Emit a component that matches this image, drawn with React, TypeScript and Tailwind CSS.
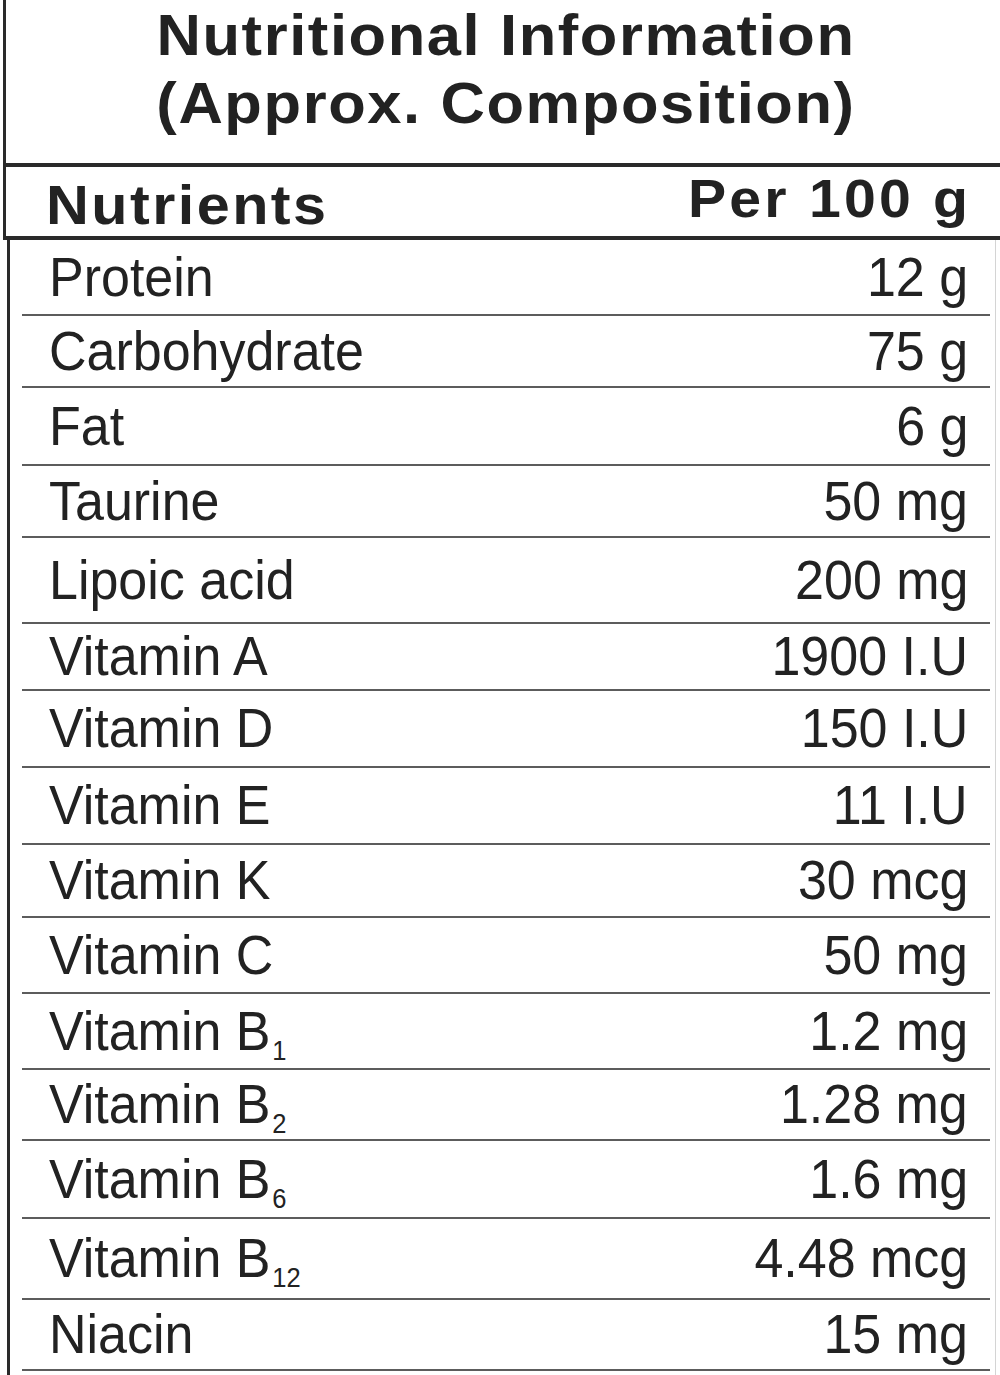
import React from "react";

type Row = { name: string; sub?: string; value: string; h: number };

const rows: Row[] = [
  { name: "Protein", value: "12 g", h: 76 },
  { name: "Carbohydrate", value: "75 g", h: 72 },
  { name: "Fat", value: "6 g", h: 78 },
  { name: "Taurine", value: "50 mg", h: 72 },
  { name: "Lipoic acid", value: "200 mg", h: 86 },
  { name: "Vitamin A", value: "1900 I.U", h: 67 },
  { name: "Vitamin D", value: "150 I.U", h: 77 },
  { name: "Vitamin E", value: "11 I.U", h: 77 },
  { name: "Vitamin K", value: "30 mcg", h: 73 },
  { name: "Vitamin C", value: "50 mg", h: 76 },
  { name: "Vitamin B", sub: "1", value: "1.2 mg", h: 76 },
  { name: "Vitamin B", sub: "2", value: "1.28 mg", h: 71 },
  { name: "Vitamin B", sub: "6", value: "1.6 mg", h: 78 },
  { name: "Vitamin B", sub: "12", value: "4.48 mcg", h: 81 },
  { name: "Niacin", value: "15 mg", h: 71 },
];

export default function App() {
  return (
    <div className="w-[1000px] h-[1375px] bg-white flex flex-col overflow-hidden font-['Liberation_Sans',Arial,sans-serif] text-[#222]">
      <div className="ml-[3px] border-l-[3px] border-[#2a2a2a]">
        <div className="h-[163px] pt-[1px] pl-[6px] text-center font-bold text-[58px] leading-[68px] tracking-[1.5px]">
          <div className="scale-x-[1.06]">Nutritional Information</div>
          <div className="scale-x-[1.06]">(Approx. Composition)</div>
        </div>
        <div className="h-[77px] border-y-4 border-[#2a2a2a] flex justify-between items-start font-bold">
          <div className="mt-[10px] ml-[40px] text-[56px] leading-none tracking-[2.3px] scale-x-[1.06] origin-left">Nutrients</div>
          <div className="mt-[4px] mr-[29px] text-[54px] leading-none tracking-[3px] scale-x-[1.06] origin-right">Per 100 g</div>
        </div>
      </div>
      <div className="flex-1 ml-[7px] w-[989px] border-l-[3px] border-l-[#2a2a2a] border-r border-r-[#d4d4d4] pl-[12px] pr-[5px]">
        {rows.map((r, i) => (
          <div
            key={i}
            className="flex justify-between items-center border-b-2 border-[#5c5c5c] pl-[27px] pr-[22px] text-[55px] leading-none"
            style={{ height: r.h }}
          >
            <div className="scale-x-[0.945] origin-left whitespace-nowrap">
              {r.name}
              {r.sub && (
                <span className="relative top-[10px] ml-[2px] text-[27px] leading-none">{r.sub}</span>
              )}
            </div>
            <div className="scale-x-[0.945] origin-right whitespace-nowrap">{r.value}</div>
          </div>
        ))}
      </div>
    </div>
  );
}
